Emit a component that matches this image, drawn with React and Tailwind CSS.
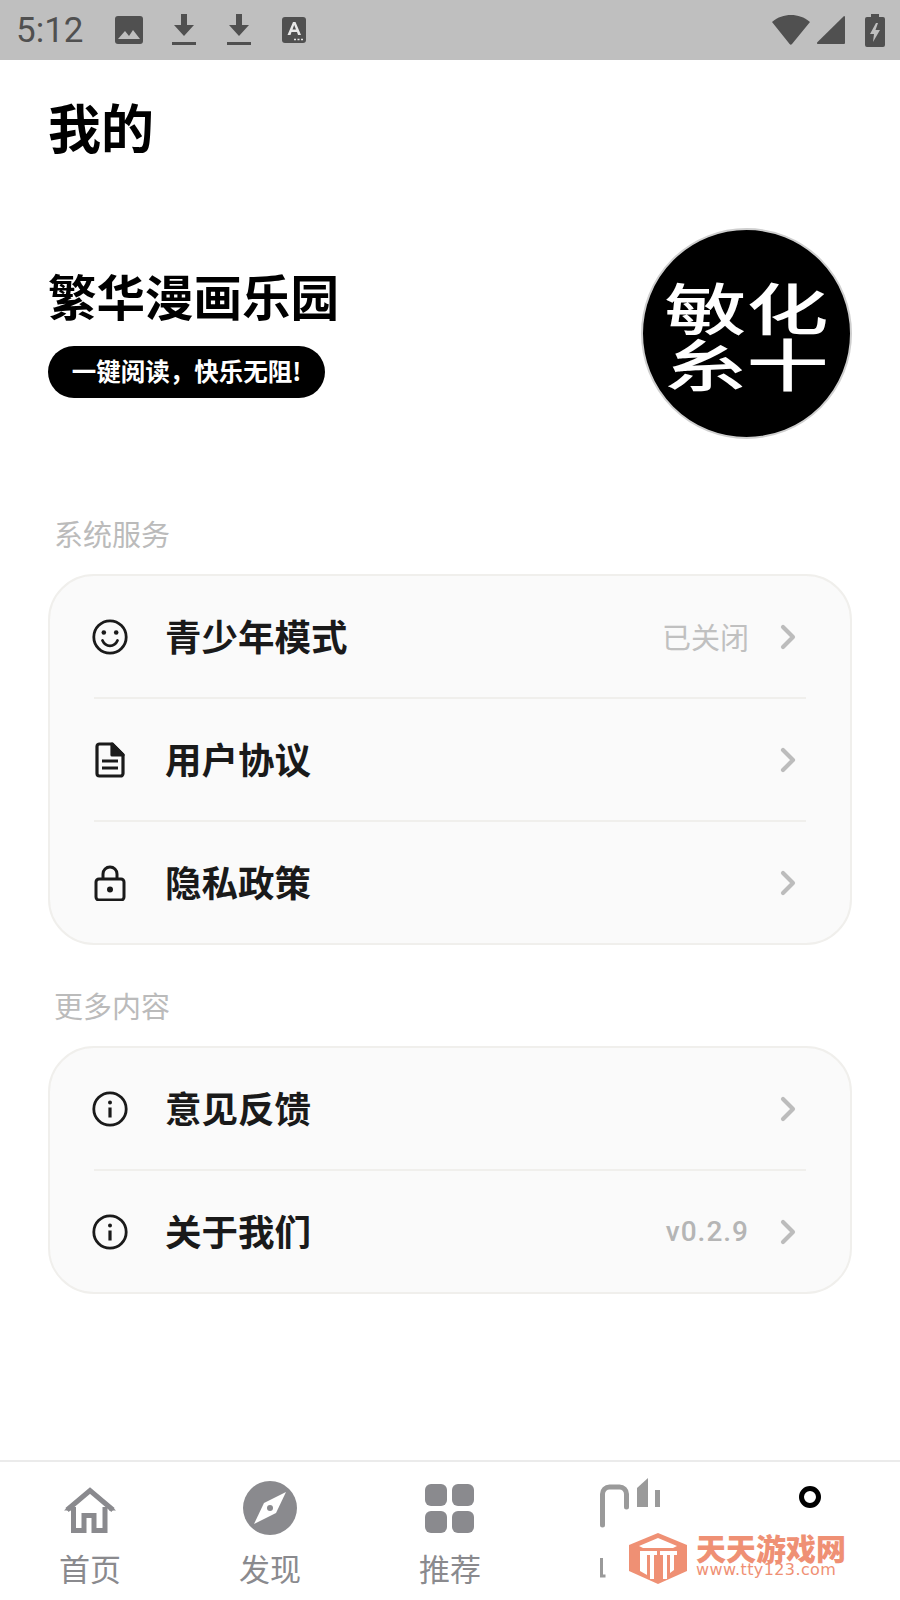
import { ChevronRight } from "lucide-react"

const cjk = "font-['Noto_Sans_CJK_SC',sans-serif]"

const SmileIcon = () => (
  <svg width="36" height="36" viewBox="0 0 36 36" fill="none" stroke="#1a1a1a" strokeWidth="2.8" strokeLinecap="round">
    <circle cx="18" cy="18" r="16.2" />
    <path d="M10.5 21.5c1.6 3.6 4.2 5.3 7.5 5.3s5.9-1.7 7.5-5.3" />
    <circle cx="11.8" cy="13.5" r="2.3" fill="#1a1a1a" stroke="none" />
    <circle cx="24.2" cy="13.5" r="2.3" fill="#1a1a1a" stroke="none" />
  </svg>
)

const DocIcon = () => (
  <svg width="36" height="36" viewBox="0 0 36 36" fill="none" stroke="#1a1a1a" strokeWidth="3.2" strokeLinejoin="round">
    <path d="M5 4.500a2.500 2.500 0 0 1 2.500-2.500H20l11 11v18.500a2.500 2.500 0 0 1-2.500 2.500h-21a2.500 2.500 0 0 1-2.500-2.500z" />
    <path d="M20 2l11 11H20z" fill="#1a1a1a" />
    <path d="M10 19h16M10 26h16" />
  </svg>
)

const LockIcon = () => (
  <svg width="36" height="36" viewBox="0 0 36 36" fill="none" stroke="#1a1a1a" strokeWidth="3" strokeLinejoin="round">
    <rect x="4" y="14" width="28" height="21" rx="3" />
    <path d="M11 14V9a7 7 0 0 1 14 0v5" />
    <circle cx="18" cy="24.500" r="3" fill="#1a1a1a" stroke="none" />
  </svg>
)

const InfoIcon = () => (
  <svg width="36" height="36" viewBox="0 0 36 36" fill="none" stroke="#1a1a1a" strokeWidth="2.8">
    <circle cx="18" cy="18" r="16.2" />
    <circle cx="18" cy="11.500" r="2" fill="#1a1a1a" stroke="none" />
    <path d="M18 16.500v10" strokeWidth="3.200" />
  </svg>
)

const groups = [
  {
    title: "系统服务",
    rows: [
      { icon: SmileIcon, label: "青少年模式", value: "已关闭" },
      { icon: DocIcon, label: "用户协议" },
      { icon: LockIcon, label: "隐私政策" },
    ],
  },
  {
    title: "更多内容",
    rows: [
      { icon: InfoIcon, label: "意见反馈" },
      { icon: InfoIcon, label: "关于我们", value: "v0.2.9", latin: true },
    ],
  },
]

const StatusBar = () => (
  <div className="h-[60px] bg-[#bfbfbf] flex items-center pl-[16px] pr-[15px] text-[#505050] shrink-0">
    <span className="text-[35px] leading-none font-['Roboto',sans-serif] w-[98px]">5:12</span>
    <svg width="30" height="30" viewBox="0 0 30 30" className="mr-[27px]">
      <rect x="1" y="1" width="28" height="28" rx="3" fill="#505050" />
      <path d="M4 24l7-8 4 5 4-6 7 9z" fill="#bfbfbf" />
    </svg>
    <svg width="26" height="34" viewBox="0 0 26 34" className="mr-[29px]" fill="#505050">
      <path d="M10 1h6v11h7L13 23 3 12h7z" />
      <rect x="1" y="29" width="24" height="3" />
    </svg>
    <svg width="26" height="34" viewBox="0 0 26 34" className="mr-[30px]" fill="#505050">
      <path d="M10 1h6v11h7L13 23 3 12h7z" />
      <rect x="1" y="29" width="24" height="3" />
    </svg>
    <svg width="24" height="26" viewBox="0 0 24 26">
      <rect width="24" height="26" rx="3" fill="#505050" />
      <path d="M5.500 18L11 5h2.500L19 18h-3l-1-3H9.500l-1 3zM10.500 12.500h3.500L12.200 8z" fill="#e8e8e8" fillRule="evenodd" />
      <path d="M12 22.500h2M15.500 22.500h2M19 22.500h2" stroke="#e8e8e8" strokeWidth="1.600" />
    </svg>
    <div className="flex-1" />
    <svg width="40" height="32" viewBox="0 0 40 32" className="mr-[5px]" fill="#505050">
      <path d="M1 8C7 3 13 1 20 1s13 2 19 7L21 30a1.500 1.500 0 0 1-2.400 0z" />
    </svg>
    <svg width="30" height="30" viewBox="0 0 30 30" className="mr-[19px]" fill="#505050">
      <path d="M28 1a1 1 0 0 1 1 1v26a1 1 0 0 1-1 1H2a1 1 0 0 1-.7-1.700z" />
    </svg>
    <svg width="20" height="33" viewBox="0 0 20 33">
      <path d="M6 0h8v3h4a2 2 0 0 1 2 2v26a2 2 0 0 1-2 2H2a2 2 0 0 1-2-2V5a2 2 0 0 1 2-2h4z" fill="#505050" />
      <path d="M11 9l-6 11h4l-1 8 7-12h-4.500l2.500-7z" fill="#bfbfbf" />
    </svg>
  </div>
)

const Logo = () => (
  <div className="w-[211px] h-[211px] rounded-full bg-black border-2 border-[#cfcfcf] flex flex-col items-center justify-center text-white shrink-0 overflow-hidden font-['Noto_Sans_CJK_SC',sans-serif] font-medium">
    <div className="flex h-[56px] items-center text-[82px] leading-none scale-y-[0.68]">
      <span>敏</span>
      <span>化</span>
    </div>
    <div className="flex h-[56px] items-center text-[82px] leading-none scale-y-[0.68]">
      <span>糸</span>
      <span>十</span>
    </div>
  </div>
)

const SettingsGroup = ({ group }) => (
  <section>
    <h2 className="text-[29px] leading-[40px] text-[#bbbbbb] font-normal pl-[54px]">{group.title}</h2>
    <div className="mt-[21px] mx-[48px] rounded-[46px] border-2 border-[#f0efec] bg-[#fafafa] px-[44px]">
      {group.rows.map((row, i) => {
        const Icon = row.icon
        return (
          <div
            key={row.label}
            className={`flex items-center ${i > 0 ? "h-[123px] border-t-2 border-[#f0efec]" : "h-[121px]"}`}
          >
            <div className="-ml-[2px]">
              <Icon />
            </div>
            <span className="ml-[37px] mb-[1px] text-[36.500px] leading-none font-bold text-[#1a1a1a]">{row.label}</span>
            <div className="flex-1" />
            {row.value && (
              <span
                className={
                  row.latin
                    ? "text-[28px] leading-none text-[#b5b5b5] font-medium font-['Roboto',sans-serif] tracking-[1px]"
                    : "text-[29px] leading-none text-[#c0c0c0]"
                }
              >
                {row.value}
              </span>
            )}
            <ChevronRight size={40} strokeWidth={2.5} color="#bcbcbc" className="ml-[19px] -mr-[2px]" />
          </div>
        )
      })}
    </div>
  </section>
)

const HomeIcon = () => (
  <svg width="54" height="48" viewBox="0 0 54 48" fill="none" stroke="#8a8a8e" strokeWidth="5">
    <path d="M4 23L27 3.500 50 23" />
    <path d="M10.500 20V43.500H21V28.500H31V43.500H42V20" />
    <path d="M1 23.500L8 17v6.500zM53 23.500L46 17v6.500z" fill="#8a8a8e" stroke="none" />
  </svg>
)

const CompassIcon = () => (
  <svg width="54" height="54" viewBox="0 0 54 54">
    <circle cx="27" cy="27" r="27" fill="#8a8a8e" />
    <path d="M43 11L33 32 11 43l10-21z" fill="#fff" />
    <circle cx="27" cy="27" r="3" fill="#8a8a8e" />
  </svg>
)

const GridIcon = () => (
  <svg width="50" height="50" viewBox="0 0 50 50" fill="#8a8a8e">
    <rect x="0" y="0" width="22" height="22" rx="6" />
    <rect x="27" y="0" width="22" height="22" rx="6" />
    <rect x="0" y="27" width="22" height="22" rx="6" />
    <rect x="27" y="27" width="22" height="22" rx="6" />
  </svg>
)

// the tab is mostly hidden in the reference, only these pieces show
const ShelfFragment = () => (
  <svg width="62" height="102" viewBox="0 0 62 102" fill="none">
    <path d="M2.500 47V16a7 7 0 0 1 7-7h10a7 7 0 0 1 7 7v13" stroke="#9a9a9a" strokeWidth="5" strokeLinecap="round" />
    <path d="M37 29V10L48 0v29z" fill="#9a9a9a" />
    <path d="M55 12h5v17h-5z" fill="#9a9a9a" />
    <path d="M1.500 80v18h4" stroke="#9a9a9a" strokeWidth="3" />
  </svg>
)

const RingFragment = () => (
  <svg width="24" height="24" viewBox="0 0 24 24" fill="none">
    <circle cx="12" cy="12" r="8.500" stroke="#000" strokeWidth="5" />
  </svg>
)

const BottomNav = () => (
  <nav className="mt-auto h-[140px] border-t-2 border-[#ebebeb] grid grid-cols-5 shrink-0">
    <div className="flex flex-col items-center pt-[22px]">
      <div className="h-[54px] flex items-center"><HomeIcon /></div>
      <span className="mt-[12px] text-[31px] leading-[36px] text-[#8a8a8e]">首页</span>
    </div>
    <div className="flex flex-col items-center pt-[19px]">
      <div className="h-[54px] flex items-center"><CompassIcon /></div>
      <span className="mt-[15px] text-[31px] leading-[36px] text-[#8a8a8e]">发现</span>
    </div>
    <div className="flex flex-col items-center pt-[22px]">
      <div className="h-[54px] flex items-start"><GridIcon /></div>
      <span className="mt-[12px] text-[31px] leading-[36px] text-[#8a8a8e]">推荐</span>
    </div>
    <div className="flex flex-col pl-[60px] pt-[16px]">
      <ShelfFragment />
    </div>
    <div className="flex flex-col items-center pt-[23px]">
      <RingFragment />
    </div>
  </nav>
)

const Watermark = () => (
  <div className="absolute left-[629px] top-[1533px] flex items-start gap-[9px]">
    <svg width="58" height="51" viewBox="0 0 58 51">
      <path d="M29 0l29 12v26L29 51 0 38V12z" fill="#ef9074" />
      <path d="M10 13l19-8 19 8-4 2H14z" fill="#fff" />
      <path d="M11 18h17v4h-3v24h-4V22h-3v20l-7-4zM31 18h17v4h-3v15l-4 3V22h-3v24h-4V22h-3z" fill="#fff" />
    </svg>
    <div className="flex flex-col -mt-[1px]">
      <span className="text-[30px] leading-[30px] font-black text-[#ef9074]">天天游戏网</span>
      <span className="text-[16px] leading-[16px] text-[#ef9074] font-['DejaVu_Sans',sans-serif] tracking-[0.400px]">www.tty123.com</span>
    </div>
  </div>
)

export default function App() {
  return (
    <div className={`relative w-[900px] h-[1600px] bg-white flex flex-col overflow-hidden ${cjk}`}>
      <StatusBar />
      <h1 className="pl-[48px] pt-[32px] text-[53px] leading-[68px] font-bold text-black">我的</h1>

      <div className="mt-[68px] pl-[48px] pr-[48px] flex items-center justify-between">
        <div className="flex flex-col items-start pb-[5px]">
          <div className="text-[48.500px] leading-[60px] font-bold text-black">繁华漫画乐园</div>
          <div className="mt-[21px] h-[52px] w-[277px] rounded-full bg-black text-white text-[24.500px] leading-none font-bold flex items-center justify-center">
            一键阅读，快乐无阻!
          </div>
        </div>
        <Logo />
      </div>

      <div className="mt-[74px] flex flex-col gap-[40px]">
        {groups.map((group) => (
          <SettingsGroup key={group.title} group={group} />
        ))}
      </div>

      <BottomNav />
      <Watermark />
    </div>
  )
}
